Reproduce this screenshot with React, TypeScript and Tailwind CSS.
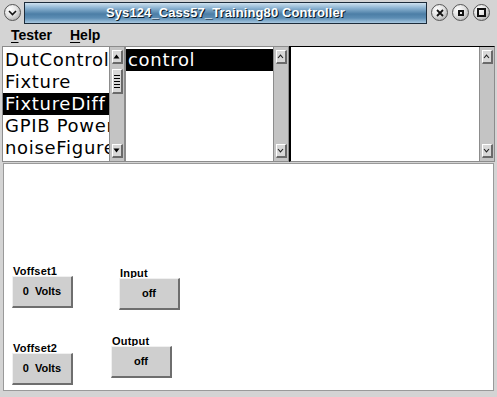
import React from 'react';

const face = 'bg-[#d4d4d4]';

function CircleBtn({ children }: { children: React.ReactNode }) {
  return (
    <div className="w-[17px] h-[17px] rounded-full border border-[#555] bg-[radial-gradient(circle_at_35%_30%,#ffffff_0%,#e2e2e2_45%,#9a9a9a_100%)] flex items-center justify-center shrink-0">
      {children}
    </div>
  );
}

function ArrowBtn({ dir, solid }: { dir: 'up' | 'down'; solid?: boolean }) {
  return (
    <div className="w-[11px] h-[14px] mx-auto bg-[#d8d8d8] border-t border-l border-t-white border-l-white border-b-2 border-r-2 border-b-[#6a6a6a] border-r-[#6a6a6a] flex items-center justify-center">
      <svg width="7" height="5" viewBox="0 0 7 5">
        {solid ? (
          dir === 'up' ? <polygon points="0.5,4.5 3.5,0.5 6.5,4.5" fill="#000" /> : <polygon points="0.5,0.5 3.5,4.5 6.5,0.5" fill="#000" />
        ) : dir === 'up' ? (
          <polyline points="1,4 3.5,1.2 6,4" fill="none" stroke="#222" strokeWidth="1.1" />
        ) : (
          <polyline points="1,1 3.5,3.8 6,1" fill="none" stroke="#222" strokeWidth="1.1" />
        )}
      </svg>
    </div>
  );
}

function Scrollbar({ solid, thumb }: { solid?: boolean; thumb?: boolean }) {
  return (
    <div className="w-[15px] h-full bg-[#c4c4c4] border-l border-[#8c8c8c] flex flex-col py-[3px] shrink-0">
      <ArrowBtn dir="up" solid={solid} />
      {thumb && (
        <div className="mt-[5px] w-[11px] h-[25px] mx-auto bg-[#d8d8d8] border-t border-l border-t-white border-l-white border-b-2 border-r-2 border-b-[#6a6a6a] border-r-[#6a6a6a] flex flex-col items-center justify-center gap-[2px]">
          {[0, 1, 2, 3, 4].map((i) => (
            <div key={i} className="w-[6px] h-px bg-black" />
          ))}
        </div>
      )}
      <div className="flex-1" />
      <ArrowBtn dir="down" solid={solid} />
    </div>
  );
}

function Row({ text, selected }: { text: string; selected?: boolean }) {
  return (
    <div
      className={`h-[22px] leading-[22px] pl-[2px] whitespace-nowrap text-[18px] tracking-[0.7px] ${
        selected ? 'bg-black text-white' : 'text-black'
      }`}
    >
      {text}
    </div>
  );
}

function Field({ label, value, className }: { label: string; value: string; className: string }) {
  return (
    <div className={`flex flex-col ${className}`}>
      <div className="h-[10px] leading-[10px] text-[11px] font-bold pl-px tracking-[0.2px] whitespace-nowrap">
        {label}
      </div>
      <div className="w-[61px] h-[32px] bg-[#cfcfcf] border-t border-l border-t-[#f0f0f0] border-l-[#f0f0f0] border-b-2 border-r-2 border-b-[#6e6e6e] border-r-[#6e6e6e] flex items-center justify-center text-[11px] font-bold whitespace-pre">
        {value}
      </div>
    </div>
  );
}

export default function App() {
  return (
    <div className={`w-[497px] h-[397px] overflow-hidden ${face} font-['Liberation_Sans',Arial,sans-serif] text-black flex flex-col`}>
      {/* title bar */}
      <div className="h-[25px] flex items-center pl-[4px] pr-[7px] shrink-0">
        <CircleBtn>
          <svg width="9" height="6" viewBox="0 0 9 6">
            <polyline points="1,1 4.5,4.5 8,1" fill="none" stroke="#111" strokeWidth="1.6" />
          </svg>
        </CircleBtn>
        <div className="ml-[3px] mr-[4px] flex-1 h-[22px] border border-[#1d2c3a] bg-[linear-gradient(180deg,#cfe2ef_0%,#8db4d2_25%,#4c7ea6_55%,#5c8db4_75%,#a9c9e1_100%)] flex items-center justify-center">
          <span className="text-white font-bold text-[13px] tracking-[0.1px] [text-shadow:1px_1px_0_#0c1a26]">
            Sys124_Cass57_Training80 Controller
          </span>
        </div>
        <div className="flex gap-[4px]">
          <CircleBtn>
            <svg width="8" height="8" viewBox="0 0 8 8">
              <path d="M1 1L7 7M7 1L1 7" stroke="#111" strokeWidth="1.8" />
            </svg>
          </CircleBtn>
          <CircleBtn>
            <div className="w-[6px] h-[6px] border-2 border-[#111]" />
          </CircleBtn>
          <CircleBtn>
            <div className="w-[9px] h-[9px] border-2 border-[#111]" />
          </CircleBtn>
        </div>
      </div>

      {/* menu */}
      <div className="h-[20px] flex items-center text-[14px] font-bold leading-[20px] shrink-0">
        <span className="ml-[11px]">
          <span className="underline underline-offset-2">T</span>ester
        </span>
        <span className="ml-[18px]">
          <span className="underline underline-offset-2">H</span>elp
        </span>
      </div>

      {/* lists */}
      <div className="mt-px h-[116px] flex pl-[2px] shrink-0 font-['DejaVu_Sans',sans-serif]">
        <div className="w-[123px] h-full border border-[#8c8c8c] flex">
          <div className="flex-1 bg-white pt-[2px] overflow-hidden">
            <Row text="DutControl" />
            <Row text="Fixture" />
            <Row text="FixtureDiff" selected />
            <Row text="GPIB Power" />
            <Row text="noiseFigure" />
          </div>
          <Scrollbar solid thumb />
        </div>
        <div className="w-[164px] h-full border border-[#8c8c8c] flex">
          <div className="flex-1 bg-white pt-[2px] overflow-hidden">
            <Row text="control" selected />
          </div>
          <Scrollbar />
        </div>
        <div className="w-[206px] h-full border border-[#8c8c8c] border-l-2 border-l-black border-t-black flex">
          <div className="flex-1 bg-white" />
          <Scrollbar />
        </div>
      </div>

      {/* panel */}
      <div className="mt-px ml-[3px] w-[491px] h-[228px] bg-white border border-[#9a9a9a] flex flex-col shrink-0">
        <div className="mt-[102px] flex items-start">
          <Field label="Voffset1" value="0  Volts" className="ml-[8px]" />
          <Field label="Input" value="off" className="ml-[46px] mt-[2px]" />
        </div>
        <div className="mt-[26px] flex items-start">
          <Field label="Voffset2" value="0  Volts" className="ml-[8px] mt-[7px]" />
          <Field label="Output" value="off" className="ml-[38px]" />
        </div>
      </div>
    </div>
  );
}
